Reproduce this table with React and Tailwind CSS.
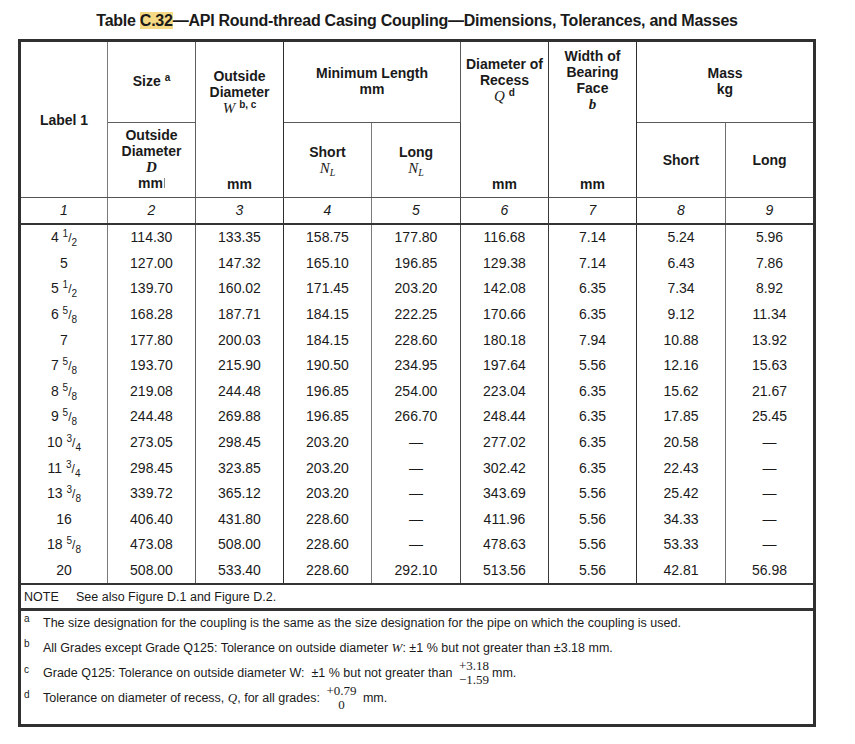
import React from "react";

const sans = "font-['Liberation_Sans',Arial,sans-serif]";
const serif = "font-['Liberation_Serif','Times_New_Roman',serif]";

const gridCols = "grid grid-cols-[87px_88px_88px_88px_89px_88px_88px_89px_87px]";

// right hand rule of each column, some darker than others like in the pdf
const colLine = [
    "border-r border-[#7a7a7a]",
    "border-r border-[#5e5e5e]",
    "border-r border-[#2e2e2e]",
    "border-r border-[#7a7a7a]",
    "border-r border-[#4a4a4a]",
    "border-r border-[#3a3a3a]",
    "border-r border-[#2e2e2e]",
    "border-r border-[#707070]",
    "",
];

const rows = [
    [["4", "1", "2"], "114.30", "133.35", "158.75", "177.80", "116.68", "7.14", "5.24", "5.96"],
    [["5"], "127.00", "147.32", "165.10", "196.85", "129.38", "7.14", "6.43", "7.86"],
    [["5", "1", "2"], "139.70", "160.02", "171.45", "203.20", "142.08", "6.35", "7.34", "8.92"],
    [["6", "5", "8"], "168.28", "187.71", "184.15", "222.25", "170.66", "6.35", "9.12", "11.34"],
    [["7"], "177.80", "200.03", "184.15", "228.60", "180.18", "7.94", "10.88", "13.92"],
    [["7", "5", "8"], "193.70", "215.90", "190.50", "234.95", "197.64", "5.56", "12.16", "15.63"],
    [["8", "5", "8"], "219.08", "244.48", "196.85", "254.00", "223.04", "6.35", "15.62", "21.67"],
    [["9", "5", "8"], "244.48", "269.88", "196.85", "266.70", "248.44", "6.35", "17.85", "25.45"],
    [["10", "3", "4"], "273.05", "298.45", "203.20", "—", "277.02", "6.35", "20.58", "—"],
    [["11", "3", "4"], "298.45", "323.85", "203.20", "—", "302.42", "6.35", "22.43", "—"],
    [["13", "3", "8"], "339.72", "365.12", "203.20", "—", "343.69", "5.56", "25.42", "—"],
    [["16"], "406.40", "431.80", "228.60", "—", "411.96", "5.56", "34.33", "—"],
    [["18", "5", "8"], "473.08", "508.00", "228.60", "—", "478.63", "5.56", "53.33", "—"],
    [["20"], "508.00", "533.40", "228.60", "292.10", "513.56", "5.56", "42.81", "56.98"],
];

function Size({v}) {
    if (v.length === 1) return <span>{v[0]}</span>;
    return (
        <span>
            {v[0]}{" "}
            <sup className="text-[10px]">{v[1]}</sup>
            <span className="text-[12px]">/</span>
            <sub className="text-[10px] -bottom-[4px]">{v[2]}</sub>
        </span>
    );
}

function NL() {
    return (
        <span className={`${serif} italic font-normal text-[15px]`}>
            N<sub className="text-[10px]">L</sub>
        </span>
    );
}

function Frac({top, bottom}) {
    return (
        <span className={`${serif} inline-flex flex-col items-center align-middle text-[13px] leading-[14px] mx-[3px] -mt-[2px]`}>
            <span>{top}</span>
            <span>{bottom}</span>
        </span>
    );
}

function Note({letter, children}) {
    return (
        <div className="h-[25px] leading-[24px] text-[12.5px] whitespace-nowrap">
            <span className="inline-block w-[22px] pl-[3px]">
                <sup className="text-[10px]">{letter}</sup>
            </span>
            {children}
        </div>
    );
}

export default function App() {
    return (
        <div className={`w-[855px] h-[744px] bg-white text-[#1a1a1a] ${sans}`}>
            <div className="ml-[18px] w-[798px] h-[39px] pt-[12px] text-center font-bold text-[16px] leading-[18px] tracking-[-0.25px]">
                Table <span className="bg-[#f6d985]">C.32</span>—API Round-thread Casing Coupling—Dimensions, Tolerances, and Masses
            </div>

            <div className="ml-[18px] w-[798px] border-[3px] border-[#303030]">
                {/* header */}
                <div className={`${gridCols} grid-rows-[81px_74px] border-b border-[#555] font-bold text-[14px] leading-[16px] text-center`}>
                    <div className={`row-span-2 flex items-center justify-center ${colLine[0]}`}>Label 1</div>
                    <div className={`flex items-center justify-center pb-[3px] border-b border-[#5a5a5a] ${colLine[1]}`}>
                        <span>Size<sup className="text-[10px] ml-[4px]">a</sup></span>
                    </div>
                    <div className={`row-span-2 flex flex-col justify-between items-center pt-[26px] pb-[5px] ${colLine[2]}`}>
                        <div>
                            Outside<br/>Diameter<br/>
                            <span className={`${serif} italic font-normal text-[15px]`}>W</span>
                            <sup className="text-[10px] ml-[4px]">b, c</sup>
                        </div>
                        <div>mm</div>
                    </div>
                    <div className={`col-span-2 flex items-center justify-center pb-[3px] border-b border-[#5a5a5a] ${colLine[4]}`}>
                        <div>Minimum Length<br/>mm</div>
                    </div>
                    <div className={`row-span-2 flex flex-col justify-between items-center pt-[14px] pb-[5px] ${colLine[5]}`}>
                        <div>
                            Diameter of<br/>Recess<br/>
                            <span className={`${serif} italic font-normal text-[15px]`}>Q</span>
                            <sup className="text-[10px] ml-[4px]">d</sup>
                        </div>
                        <div>mm</div>
                    </div>
                    <div className={`row-span-2 flex flex-col justify-between items-center pt-[6px] pb-[5px] ${colLine[6]}`}>
                        <div>
                            Width of<br/>Bearing<br/>Face<br/>
                            <span className={`${serif} italic text-[15px]`}>b</span>
                        </div>
                        <div>mm</div>
                    </div>
                    <div className="col-span-2 flex items-center justify-center pb-[3px] border-b border-[#5a5a5a]">
                        <div>Mass<br/>kg</div>
                    </div>

                    <div className={`pt-[4px] ${colLine[1]}`}>
                        Outside<br/>Diameter<br/>
                        <span className={`${serif} italic text-[15px]`}>D</span><br/>
                        mm<span className="inline-block w-px h-[10px] bg-[#888] ml-[1px]"></span>
                    </div>
                    <div className={`flex items-center justify-center ${colLine[3]}`}>
                        <div>Short<br/><NL/></div>
                    </div>
                    <div className={`flex items-center justify-center ${colLine[4]}`}>
                        <div>Long<br/><NL/></div>
                    </div>
                    <div className={`flex items-center justify-center ${colLine[7]}`}>Short</div>
                    <div className="flex items-center justify-center">Long</div>
                </div>

                {/* column numbers */}
                <div className={`${gridCols} h-[27px] border-b-2 border-[#333] italic text-[14px]`}>
                    {colLine.map((c, i) => (
                        <div key={i} className={`flex items-center justify-center ${c}`}>{i + 1}</div>
                    ))}
                </div>

                {/* data */}
                <div className="border-b-2 border-[#333] text-[14px]">
                    {rows.map((r, ri) => (
                        <div key={ri} className={`${gridCols} h-[25.6px]`}>
                            {r.map((v, ci) => (
                                <div key={ci} className={`flex items-center justify-center ${colLine[ci]}`}>
                                    {ci === 0 ? <Size v={v}/> : v}
                                </div>
                            ))}
                        </div>
                    ))}
                </div>

                {/* note */}
                <div className="h-[26px] border-b-[3px] border-[#333] flex items-center pl-[3px] pt-[1px] text-[12.5px]">
                    <span className="w-[52px]">NOTE</span>
                    <span>See also Figure D.1 and Figure D.2.</span>
                </div>

                {/* footnotes */}
                <div className="h-[113px]">
                    <Note letter="a">
                        The size designation for the coupling is the same as the size designation for the pipe on which the coupling is used.
                    </Note>
                    <Note letter="b">
                        All Grades except Grade Q125: Tolerance on outside diameter <span className={`${serif} italic text-[13px]`}>W</span>: ±1 % but not greater than ±3.18 mm.
                    </Note>
                    <Note letter="c">
                        Grade Q125: Tolerance on outside diameter W:&nbsp; ±1 % but not greater than <Frac top="+3.18" bottom="−1.59"/>mm.
                    </Note>
                    <Note letter="d">
                        Tolerance on diameter of recess, <span className={`${serif} italic text-[13px]`}>Q</span>, for all grades: <Frac top="+0.79" bottom="0"/> mm.
                    </Note>
                </div>
            </div>
        </div>
    );
}
